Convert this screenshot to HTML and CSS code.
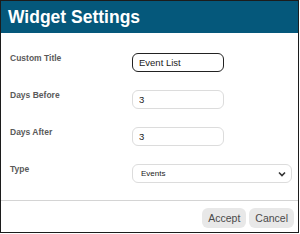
FILE: index.html
```html
<!DOCTYPE html>
<html lang="en">

<head>
    <meta charset="UTF-8">
    <meta name="viewport" content="width=device-width, initial-scale=1.0">
    <title>Widget Settings</title>
    <link rel="stylesheet" href="styles.css">
</head>

<body>
    <div class="dialog">
        <header>
            <h1>Widget Settings</h1>
        </header>

        <main class="form">
            <label for="title">Custom Title</label>
            <input id="title" class="field active" type="text" value="Event List">

            <label for="before">Days Before</label>
            <input id="before" class="field" type="text" value="3">

            <label for="after">Days After</label>
            <input id="after" class="field" type="text" value="3">

            <label for="type">Type</label>
            <select id="type" class="field select">
                <option>Events</option>
                <option>Tasks</option>
            </select>
        </main>

        <footer>
            <button class="btn">Accept</button>
            <button class="btn">Cancel</button>
        </footer>
    </div>
</body>

</html>
```

FILE: styles.css
```css
body {
    margin: 0;
    padding: 0;
    font-family: "Liberation Sans", Arial, sans-serif;
    background: #fff;
}

.dialog {
    width: 299px;
    height: 233px;
    box-sizing: border-box;
    border: 1px solid #1c1c1c;
    display: flex;
    flex-direction: column;
}

header {
    background-color: #05587b;
    height: 32px;
    padding-left: 7px;
}

header h1 {
    margin: 0;
    color: white;
    font-size: 17.5px;
    line-height: 32px;
    font-weight: bold;
}

.form {
    display: grid;
    grid-template-columns: 122px 1fr;
    row-gap: 18px;
    align-items: start;
    padding: 20px 5px 0 9px;
}

.form label {
    font-size: 8.5px;
    font-weight: bold;
    color: #5a5a5a;
    line-height: 10px;
}

.field {
    box-sizing: border-box;
    height: 19px;
    width: 92px;
    border: 1px solid #dcdcdc;
    border-radius: 6px;
    padding: 0 6px;
    font-family: "Liberation Sans", Arial, sans-serif;
    font-size: 9.5px;
    color: #222;
    background: #fff;
    outline: none;
}

.field.active {
    border: 1.5px solid #222;
}

.select {
    width: 160px;
    font-size: 8px;
    padding-left: 8px;
    appearance: none;
    -webkit-appearance: none;
    background-image: url("data:image/svg+xml,%3Csvg xmlns='http://www.w3.org/2000/svg' width='8' height='6' viewBox='0 0 8 6'%3E%3Cpath d='M1 1.5 L4 4.5 L7 1.5' fill='none' stroke='%23333' stroke-width='1.6'/%3E%3C/svg%3E");
    background-repeat: no-repeat;
    background-position: right 5px center;
}

footer {
    margin-top: auto;
    border-top: 1px solid #d4d4d4;
    display: flex;
    justify-content: flex-end;
    gap: 3px;
    padding: 7px 4px 4px;
}

.btn {
    height: 20px;
    padding: 0 6px;
    border: none;
    border-radius: 6px;
    background-color: #e8e8e8;
    color: #4a4a4a;
    font-family: "Liberation Sans", Arial, sans-serif;
    font-size: 10.5px;
    cursor: pointer;
}
```
